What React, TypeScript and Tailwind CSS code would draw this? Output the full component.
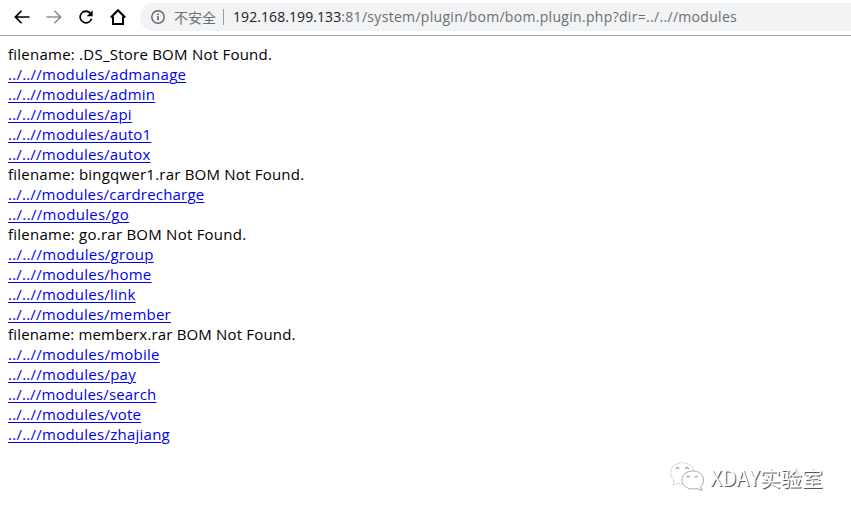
import React from "react";

type Row = { text: string; link?: boolean; tracking: string };

const rows: Row[] = [
  { text: "filename: .DS_Store BOM Not Found.", tracking: "tracking-[0.24px]" },
  { text: "../..//modules/admanage", link: true, tracking: "tracking-[0.26px]" },
  { text: "../..//modules/admin", link: true, tracking: "tracking-[0.22px]" },
  { text: "../..//modules/api", link: true, tracking: "tracking-[0.23px]" },
  { text: "../..//modules/auto1", link: true, tracking: "tracking-[0.22px]" },
  { text: "../..//modules/autox", link: true, tracking: "tracking-[0.22px]" },
  { text: "filename: bingqwer1.rar BOM Not Found.", tracking: "tracking-[0.22px]" },
  { text: "../..//modules/cardrecharge", link: true, tracking: "tracking-[0.19px]" },
  { text: "../..//modules/go", link: true, tracking: "tracking-[0.33px]" },
  { text: "filename: go.rar BOM Not Found.", tracking: "tracking-[0.24px]" },
  { text: "../..//modules/group", link: true, tracking: "tracking-[0.28px]" },
  { text: "../..//modules/home", link: true, tracking: "tracking-[0.24px]" },
  { text: "../..//modules/link", link: true, tracking: "tracking-[0.24px]" },
  { text: "../..//modules/member", link: true, tracking: "tracking-[0.22px]" },
  { text: "filename: memberx.rar BOM Not Found.", tracking: "tracking-[0.17px]" },
  { text: "../..//modules/mobile", link: true, tracking: "tracking-[0.25px]" },
  { text: "../..//modules/pay", link: true, tracking: "tracking-[0.25px]" },
  { text: "../..//modules/search", link: true, tracking: "tracking-[0.17px]" },
  { text: "../..//modules/vote", link: true, tracking: "tracking-[0.24px]" },
  { text: "../..//modules/zhajiang", link: true, tracking: "tracking-[0.25px]" },
];

function NavIcon({ d, className }: { d: string; className: string }) {
  return (
    <svg viewBox="0 0 24 24" className={`size-5 shrink-0 ${className}`} fill="currentColor">
      <path d={d} />
    </svg>
  );
}

function Toolbar() {
  return (
    <header className="flex h-[36px] items-start border-b border-[#a9a9a9] bg-white pl-3">
      <div className="flex items-center gap-3 pt-[7px]">
        <NavIcon className="text-black" d="M21 11H6.4l5.8-5.8L10.8 3.8 2.6 12l8.2 8.2 1.4-1.4L6.4 13H21z" />
        <NavIcon className="text-[#919191]" d="M3 11h14.6l-5.8-5.8 1.4-1.4 8.2 8.2-8.2 8.2-1.4-1.4 5.8-5.8H3z" />
        <NavIcon className="text-black" d="M17.65 6.35A8 8 0 1 0 19.73 14h-2.4A5.8 5.8 0 1 1 12 6.2c1.6 0 3 .7 4.1 1.7L12.9 11H20V4z" />
        <svg viewBox="0 0 20 20" className="size-5 shrink-0" fill="none" stroke="#000" strokeWidth="2">
          <path d="M2.8 10.5 10 3.2l7.2 7.3M5 9.5V17h10V9.500" />
        </svg>
      </div>
      <div className="mt-[3px] ml-3 flex h-7 flex-1 items-center rounded-l-full bg-[#f1f3f4] pl-[11px]">
        <svg viewBox="0 0 14 14" className="size-[14px] shrink-0" fill="none" stroke="#5f6368" strokeWidth="1.400">
          <circle cx="7" cy="7" r="6.200" />
          <path d="M7 6v4.300M7 3.500v1.500" strokeWidth="1.600" />
        </svg>
        <span className="ml-[9px] font-['Noto_Sans_CJK_SC',sans-serif] text-[14px] leading-7 text-[#6b6f73]">不安全</span>
        <span className="ml-[7px] h-4 w-px bg-[#9b9ea2]" />
        <span className="ml-[9px] whitespace-pre font-['Open_Sans',sans-serif] text-[14px] leading-7 tracking-[0.31px] text-[#6b6f73]">
          <span className="tracking-[0.08px] text-[#202124]">192.168.199.133</span>
          :81/system/plugin/bom/bom.plugin.php?dir=../..//modules
        </span>
      </div>
    </header>
  );
}

function Watermark() {
  return (
    <div className="absolute top-[460px] left-[669px] flex items-center">
      <svg viewBox="0 0 36 34" className="h-[34px] w-9" fill="#fff" stroke="#888" strokeWidth="0.700">
        <path stroke="#aaa" strokeDasharray="1.500 1" d="M5 21C-1 14 1 4 12 3c8-1 13 4 13 9M5 21l-1 4 5-2c2 1 4 1 5 1" />
        <path d="M13 20C13 8 34.500 8 34.500 20c0 3-1 5-3 6.500l1.500 4-5-2c-8 2-15-2-15-8.500z" />
        <path stroke="#555" fill="none" d="M7 9a1.500 1.500 0 0 1 3 0M16.500 9a1.500 1.500 0 0 1 3 0M18 17.500a1.300 1.300 0 0 1 2.600 0M26 17.500a1.300 1.300 0 0 1 2.600 0" />
      </svg>
      <span className="ml-[5px] font-['Noto_Sans_CJK_SC',sans-serif] text-[21px] leading-[34px] text-white [text-shadow:1px_1px_0_#555]">
        XDAY实验室
      </span>
    </div>
  );
}

export default function App() {
  return (
    <div className="relative h-[516px] w-full overflow-hidden bg-white">
      <Toolbar />
      <main className="flex flex-col items-start pt-2 pl-2 font-['Open_Sans',sans-serif] text-[15px] leading-5 text-black">
        {rows.map((row) =>
          row.link ? (
            <a
              key={row.text}
              href="#"
              className={`whitespace-pre text-[#0000ee] underline decoration-1 underline-offset-2 ${row.tracking}`}
            >
              {row.text}
            </a>
          ) : (
            <p key={row.text} className={`whitespace-pre ${row.tracking}`}>{row.text}</p>
          ),
        )}
      </main>
      <Watermark />
    </div>
  );
}
